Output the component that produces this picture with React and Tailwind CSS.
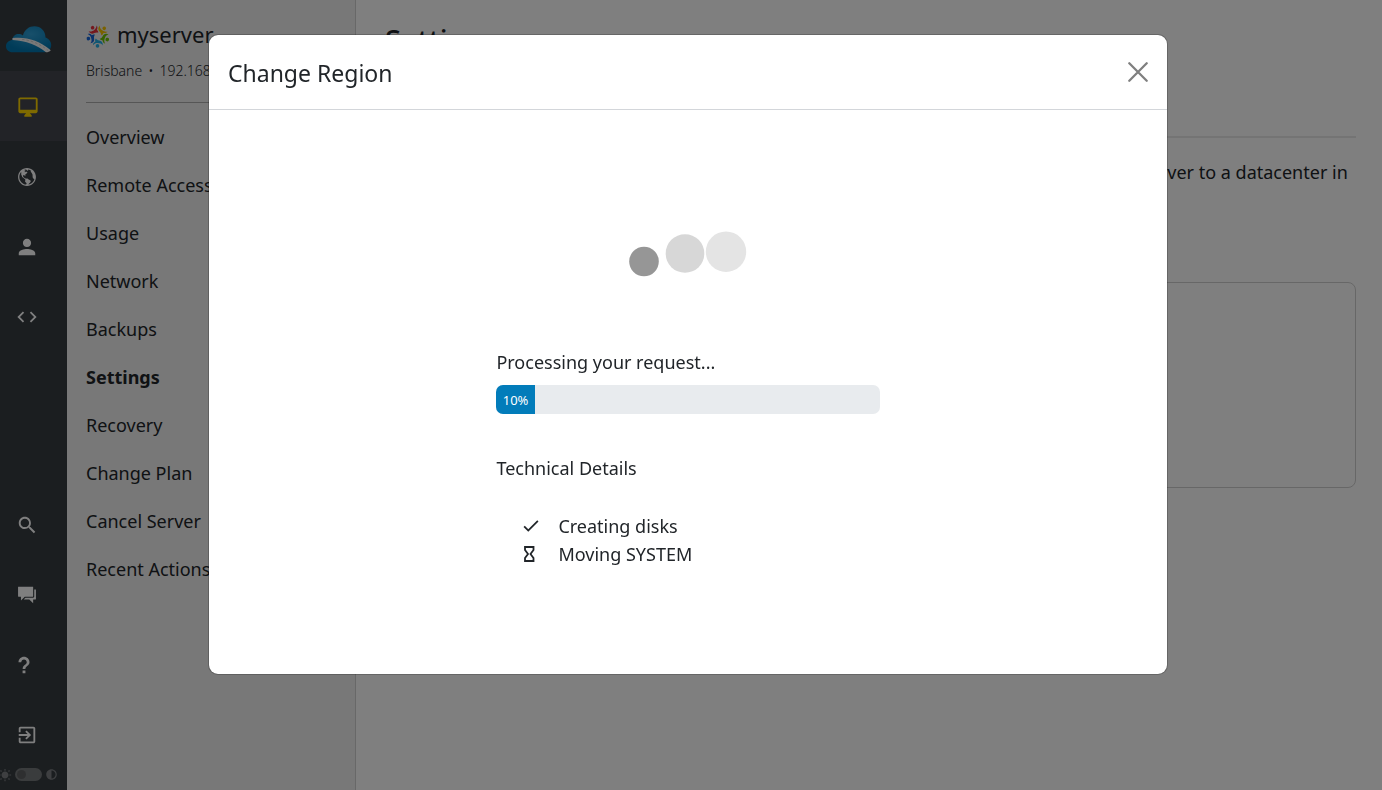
import { IoMdDesktop, IoMdGlobe, IoMdPerson, IoMdCode, IoMdSearch, IoMdChatboxes, IoMdHelp, IoMdExit, IoMdCheckmark, IoMdSunny, IoMdContrast } from "react-icons/io";

const topLinks = [
  { label: "Servers", Icon: IoMdDesktop, active: true },
  { label: "Domains", Icon: IoMdGlobe },
  { label: "Account", Icon: IoMdPerson },
  { label: "API", Icon: IoMdCode },
];

const bottomLinks = [
  { label: "Search", Icon: IoMdSearch },
  { label: "Support", Icon: IoMdChatboxes },
  { label: "Help", Icon: IoMdHelp, narrow: true },
  { label: "Log out", Icon: IoMdExit },
];

const serverLinks = [
  "Overview", "Remote Access", "Usage", "Network", "Backups",
  "Settings", "Recovery", "Change Plan", "Cancel Server", "Recent Actions",
];

const figures = [
  { color: "#f5c400", angle: 36 },
  { color: "#6cc400", angle: 108 },
  { color: "#22aee6", angle: 180 },
  { color: "#1465d8", angle: 252 },
  { color: "#e8303c", angle: 324 },
];

function CloudLogo() {
  return (
    <svg viewBox="0 0 46 27" className="w-[46px] h-[27px]" aria-hidden="true">
      <defs>
        <radialGradient id="cloud" cx="0.55" cy="0.3" r="0.65">
          <stop offset="0" stopColor="#2f9fd6" />
          <stop offset="1" stopColor="#0077b0" />
        </radialGradient>
      </defs>
      <path d="M6.500 26.300C2.800 26.300 0 23.800 0 20.300c0-3.400 2.600-5.700 6.300-6.200C6.800 9.800 9.600 8 12.500 8c1.800 0 3.200.4 4.400 1.400C18.600 3.600 23 .3 28.500.3c6.300 0 11 4.700 11 11.200 3.400 1.200 5.700 4 5.700 7.600 0 4.200-3.100 7.200-6.700 7.200z" fill="url(#cloud)" />
      <path d="M6.500 12C20 10.500 33 14 44.800 24.200C43.500 25.500 42 26.300 40 26.300C31.500 19 20 14.800 6.500 14z" fill="#f2f2f2" />
      <path d="M16 13.300C25 14.300 34 17.800 42 24.500" fill="none" stroke="#c4c4c4" strokeWidth="0.800" strokeDasharray="2.500 2" />
    </svg>
  );
}

function PeopleLogo() {
  return (
    <svg viewBox="-12 -12 24 24" className="mt-1 size-6" aria-hidden="true">
      {figures.map(({ color, angle }) => (
        <g key={angle} transform={`rotate(${angle})`} fill={color}>
          <circle cx="0.500" cy="-9.900" r="1.800" />
          <path d="M-4.600 -9.600C-5.200 -6.500-3.600 -4.800-1.200 -4.500C.3 -4.200 1.500 -3.700 2.100 -2.500C3 -3.400 3.100 -4.600 2.600 -5.600C4.200 -6.300 5.100 -7.600 5 -9.200C3.800 -7.700 2.200 -7.100.5 -7.100C-2 -7.100-3.800 -7.800-4.600 -9.600z" />
        </g>
      ))}
    </svg>
  );
}

function Hourglass() {
  return (
    <svg viewBox="0 0 18 18" className="size-[18px]" fill="none" stroke="currentColor" strokeWidth="1.800" aria-hidden="true">
      <path d="M4 2H12.500V5L9.500 9L12.500 13V16H4V13L7 9L4 5Z" />
    </svg>
  );
}

function RailLink({ label, Icon, active, narrow }) {
  return (
    <a
      href="#"
      aria-label={label}
      className={`flex h-[70px] items-center pt-0.5 ${narrow ? "pl-[13px]" : "pl-4"} ${active ? "bg-[#45474f] text-[#ffd500]" : "text-white"}`}
    >
      <Icon className={`size-[22px] ${active ? "ml-px" : ""}`} />
    </a>
  );
}

function Rail() {
  return (
    <nav aria-label="Main" className="flex w-[67px] shrink-0 flex-col bg-[#363c40]">
      <a href="#" aria-label="Home" className="flex h-[71px] items-center pt-[7px] pl-[6px]">
        <CloudLogo />
      </a>
      {topLinks.map((link) => <RailLink key={link.label} {...link} />)}
      <div className="mt-auto">
        {bottomLinks.map((link) => <RailLink key={link.label} {...link} />)}
      </div>
      <label className="-mt-1 flex h-[25px] items-center gap-[3px] pb-1.5 text-[#7c7f82]">
        <IoMdSunny className="-ml-0.5 size-3.5" />
        <input type="checkbox" aria-label="Dark theme" className="peer sr-only" />
        <span className="flex h-[13px] w-[27px] items-center rounded-full bg-[#75787a] px-0.5">
          <span className="size-[9px] rounded-full bg-[#5c5f61]" />
        </span>
        <IoMdContrast className="size-[13px]" />
      </label>
    </nav>
  );
}

function ServerPanel() {
  return (
    <aside className="w-[289px] shrink-0 border-r border-[#d0d0d0] bg-[#f0f0f0] px-[19px] pt-4">
      <div className="flex items-center gap-[7px]">
        <PeopleLogo />
        <h2 className="text-[22px] leading-9">myserver</h2>
      </div>
      <p className="mt-[7px] flex gap-1.5 text-sm leading-6 font-light">
        <span>Brisbane</span>
        <span>•</span>
        <span>192.168.0.1</span>
      </p>
      <hr className="mt-[19px] border-[#acacac]" />
      <ul className="mt-2.5">
        {serverLinks.map((name) => (
          <li key={name}>
            <a href="#" className={`flex h-12 items-center ${name === "Settings" ? "font-bold" : ""}`}>{name}</a>
          </li>
        ))}
      </ul>
    </aside>
  );
}

function SettingsPage() {
  return (
    <main className="min-w-0 flex-1 bg-white pt-5 pr-[26px] pl-[29px]">
      <h1 className="text-[29px] leading-10 font-medium">Settings</h1>
      <hr className="mt-[76px] border-t-2 border-[#e8e8e8]" />
      <p className="mt-5 leading-[29px]">
        Choose the region where your server is located. This action will move all the disks of your server to a datacenter in another region.
      </p>
      <div className="mt-[66px] h-[206px] rounded-lg border border-[#cfcfcf]" />
    </main>
  );
}

function Spinner() {
  return (
    <svg viewBox="0 0 118 46" className="mx-auto h-[46px] w-[118px]" role="img" aria-label="Loading">
      <circle cx="15" cy="30.500" r="14.800" fill="#969696" />
      <circle cx="56" cy="22.500" r="19.300" fill="#d7d7d7" />
      <circle cx="97" cy="20.700" r="20.200" fill="#e4e4e4" />
    </svg>
  );
}

function ChangeRegionDialog() {
  const progress = 10;
  return (
    <div className="fixed inset-0 flex items-start justify-center bg-black/50 pt-[34px] pr-[6px]">
      <section
        role="dialog"
        aria-modal="true"
        aria-labelledby="dialog-title"
        className="w-full max-w-[960px] rounded-[10px] border border-black/20 bg-white bg-clip-padding"
      >
        <header className="flex h-[75px] items-center justify-between border-b border-[#d3d6da] px-[19px]">
          <h2 id="dialog-title" className="pt-0.5 text-[23px]">Change Region</h2>
          <button type="button" aria-label="Close" className="text-[#7f7f7f]">
            <svg viewBox="0 0 20 20" className="size-5" fill="none" stroke="currentColor" strokeWidth="2.300" strokeLinecap="round">
              <path d="M1.300 1.300L18.700 18.700M18.700 1.300L1.300 18.700" />
            </svg>
          </button>
        </header>
        <div className="pt-[121px] pb-[106px]">
          <Spinner />
          <div className="mx-auto w-[40%]">
            <p id="progress-label" className="mt-[71px] leading-7">Processing your request...</p>
            <div
              role="progressbar"
              aria-labelledby="progress-label"
              aria-valuenow={progress}
              aria-valuemin={0}
              aria-valuemax={100}
              className="mt-[9px] flex h-[29px] overflow-hidden rounded-[7px] bg-[#e8ebee]"
            >
              <div className="flex items-center justify-center bg-[#027cba] pt-0.5 text-[13px] text-white" style={{ width: `${progress}%` }}>
                {progress}%
              </div>
            </div>
            <h3 className="mt-10 leading-7">Technical Details</h3>
            <ul className="mt-[30px] pl-[25px] leading-7">
              <li className="flex items-center gap-[17px]"><IoMdCheckmark className="size-5" />Creating disks</li>
              <li className="flex items-center gap-[19px]"><Hourglass />Moving SYSTEM</li>
            </ul>
          </div>
        </div>
      </section>
    </div>
  );
}

export default function App() {
  return (
    <div className="flex min-h-screen font-['Noto_Sans','Open_Sans',sans-serif] text-[18px] text-[#212529]">
      <Rail />
      <ServerPanel />
      <SettingsPage />
      <ChangeRegionDialog />
    </div>
  );
}
